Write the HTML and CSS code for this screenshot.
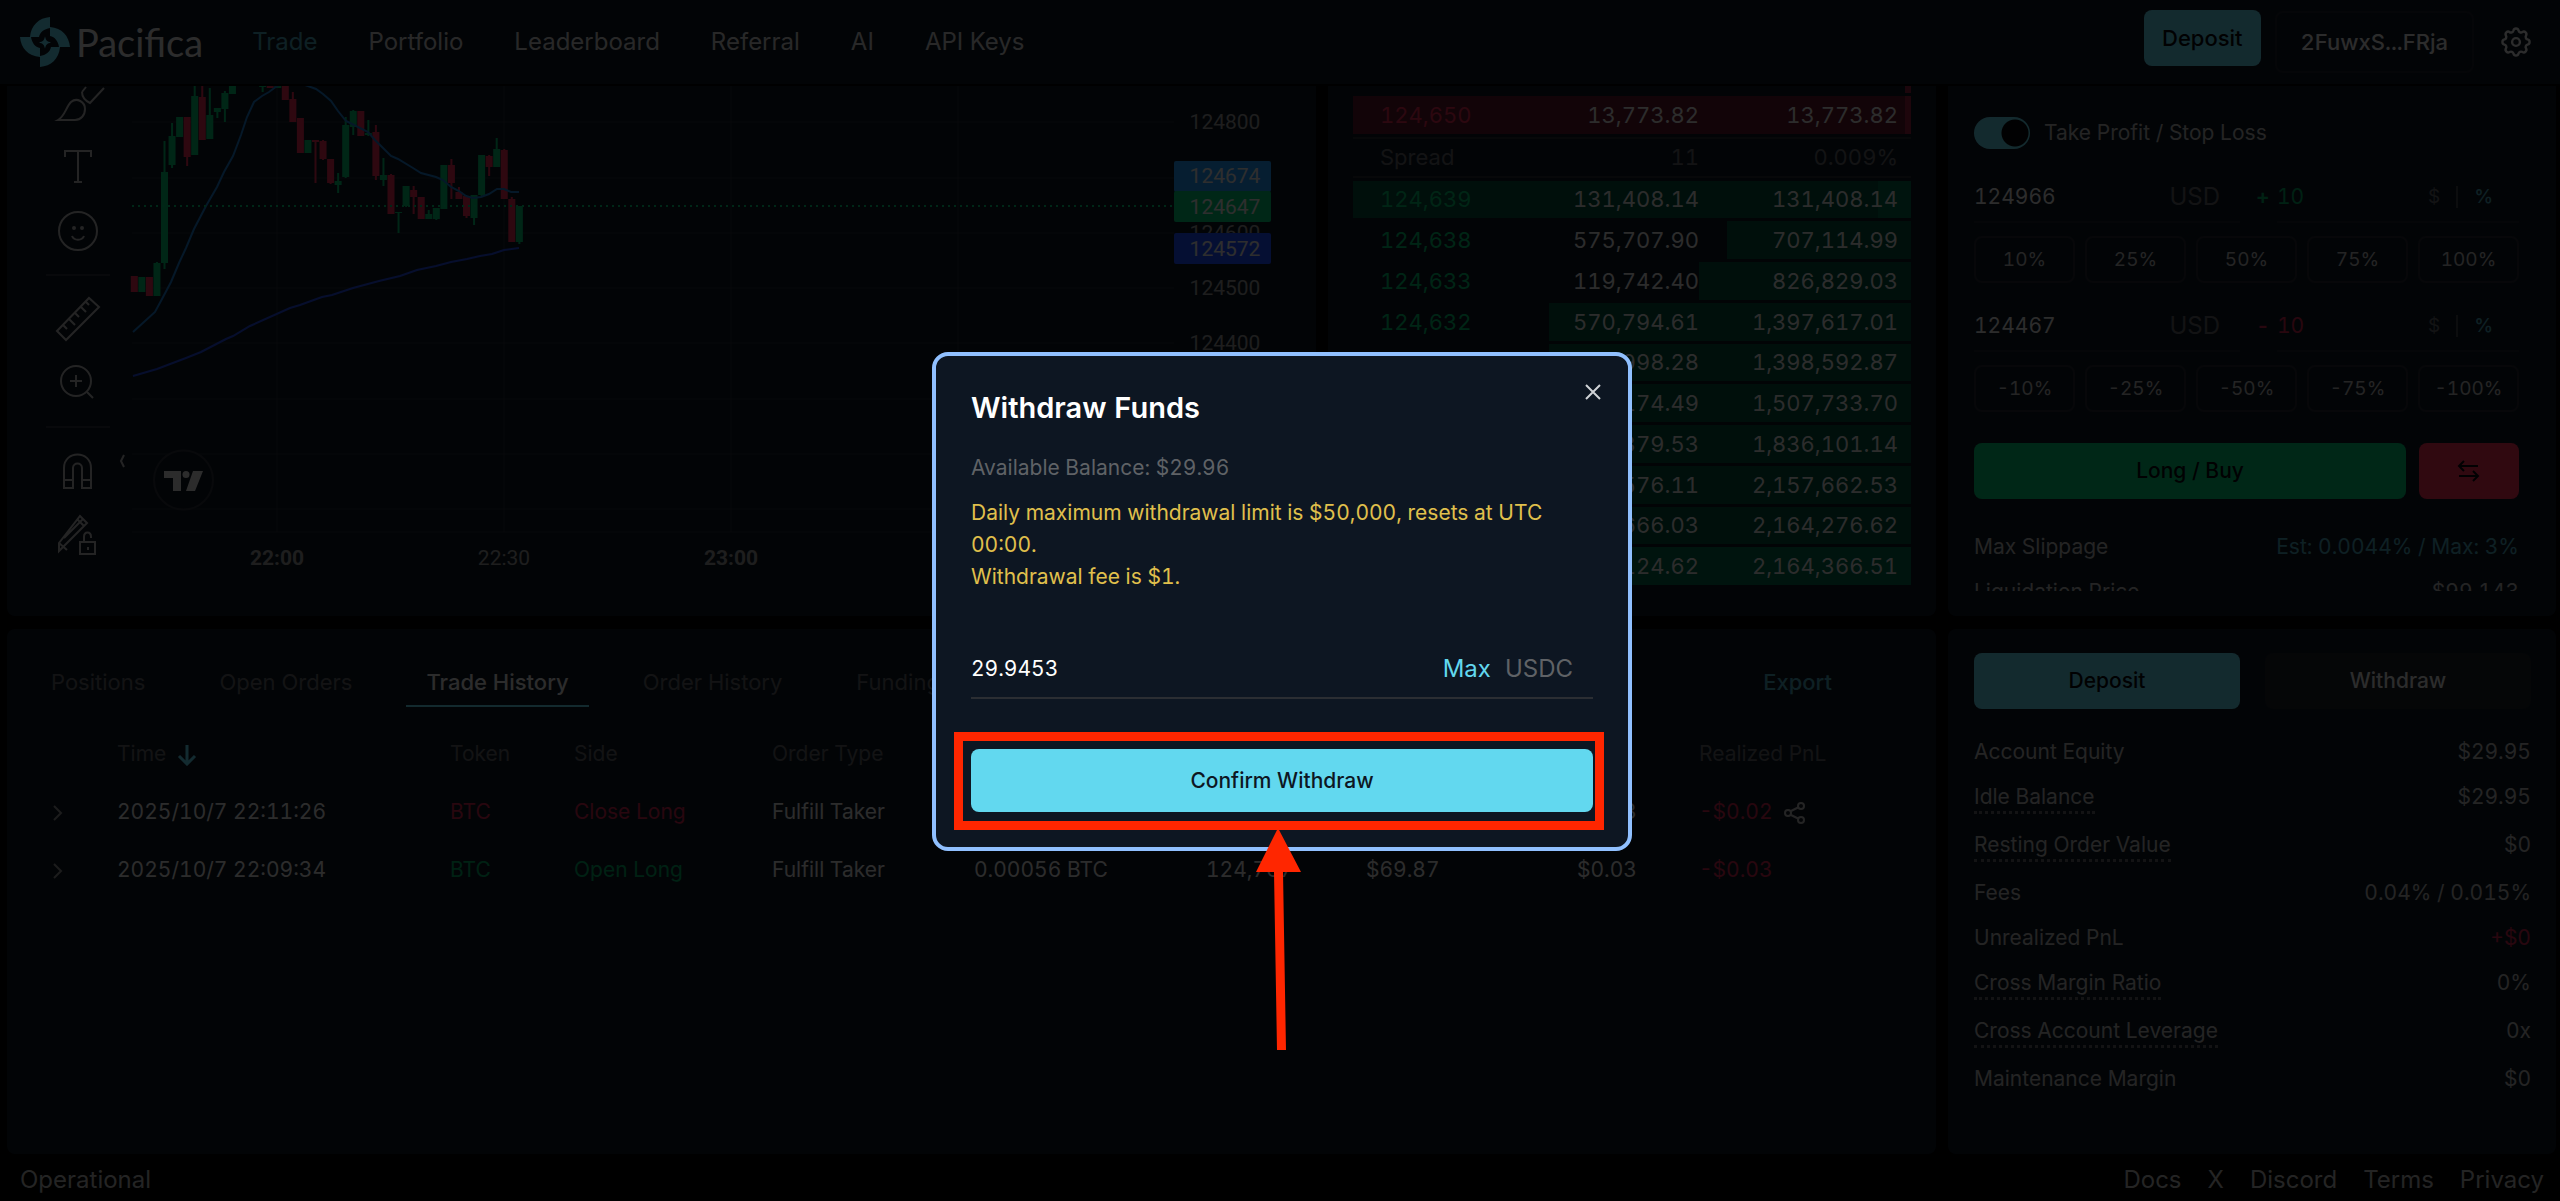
FILE: index.html
```html
<!DOCTYPE html>
<html lang="en">
    <head>
        <meta charset="utf-8">
        <meta name="viewport" content="width=device-width, initial-scale=1.0">
        <title>Pacifica</title>
        <link rel="stylesheet" href="styles.css">
    </head>
    <body>
        <header class="topbar">
            <a class="brand" href="#">
                <svg width="50" height="50" viewBox="0 0 50 50" fill="#62d8ef">
                    <path d="M30 0v11c-6 1-10 4-11 9H10C11 8 19 1 30 0z"/>
                    <path d="M50 30H39c-1-6-4-10-9-11V10C42 11 49 19 50 30z"/>
                    <path d="M20 50V39c6-1 10-4 11-9h9C39 42 31 49 20 50z"/>
                    <path d="M0 20h11c1 6 4 10 9 11v9C8 39 1 31 0 20z"/>
                    <path d="M25 19.500c1 4 2 5 6 6-4 1-5 2-6 6-1-4-2-5-6-6 4-1 5-2 6-6z"/>
                </svg>
                <span>Pacifica</span>
            </a>
            <nav class="nav">
                <a class="active" href="#">Trade</a>
                <a href="#">Portfolio</a>
                <a href="#">Leaderboard</a>
                <a href="#">Referral</a>
                <a href="#">AI</a>
                <a href="#">API Keys</a>
            </nav>
            <div class="account">
                <button class="btn btn-primary btn-top">Deposit</button>
                <button class="btn btn-wallet">2FuwxS...FRja</button>
                <button class="btn-icon" aria-label="Settings">
                    <svg width="36" height="36" viewBox="0 0 24 24" fill="none" stroke="#dcdcdc" stroke-width="1.600" stroke-linejoin="round">
                        <path d="M10.300 4.300c.4-1.800 3-1.800 3.400 0a1.700 1.700 0 0 0 2.600 1.100c1.500-1 3.300.8 2.400 2.400a1.700 1.700 0 0 0 1 2.500c1.800.4 1.800 3 0 3.400a1.700 1.700 0 0 0-1 2.600c.9 1.500-.9 3.300-2.400 2.400a1.700 1.700 0 0 0-2.600 1c-.4 1.800-3 1.800-3.400 0a1.700 1.700 0 0 0-2.600-1c-1.500.9-3.300-.9-2.400-2.400a1.700 1.700 0 0 0-1-2.600c-1.800-.4-1.800-3 0-3.400a1.700 1.700 0 0 0 1-2.500c-.9-1.600.9-3.400 2.400-2.400 1 .6 2.300.1 2.600-1.100z"/>
                        <circle cx="12" cy="12" r="2.600"/>
                    </svg>
                </button>
            </div>
        </header>

        <main class="workspace">
            <section class="panel chart">
                <div class="tools">
                    <button aria-label="Brush"><svg viewBox="0 0 56 56"><path d="M8 45c7-4 8-13 13-18 6-5 14 0 14 7 0 6-4 11-10 11zM32 17c0 5 4 9 8 11l14-15M32 17l4-5"/></svg></button>
                    <button aria-label="Text"><svg viewBox="0 0 56 56"><path d="M15 18v-6h26v6M28 12v31M24 43h8"/></svg></button>
                    <button aria-label="Emoji"><svg viewBox="0 0 56 56"><circle cx="28" cy="28" r="19"/><path d="M22 33c2 5 10 5 12 0"/><circle cx="24" cy="25" r="1"/><circle cx="32" cy="25" r="1"/></svg></button>
                    <hr>
                    <button aria-label="Measure"><svg viewBox="0 0 56 56"><path d="M7 40L39 7l10 9-33 33zM13 34l4 4M19 28l6 6M25 22l4 4M31 16l5 5M36 11l3 3"/></svg></button>
                    <button aria-label="Zoom in"><svg viewBox="0 0 56 56"><circle cx="26" cy="26" r="15"/><path d="M26 20v12M20 26h12M37 37l6 6"/></svg></button>
                    <hr>
                    <button aria-label="Magnet"><svg viewBox="0 0 56 56"><path d="M14 45V25c0-18 27-18 27 0v20h-9V25c0-6-9-6-9 0v20zM14 37h9M32 37h9"/></svg></button>
                    <button aria-label="Lock drawings"><svg viewBox="0 0 56 56"><path d="M9 36L30 9l7 7-20 20-8 8zM9 36l8 7M14 31L33 12M27 12l7 7M30 35h15v12H30zM34 35v-5c0-6 7-6 7 0v1M38 40v3"/></svg></button>
                </div>
                <svg class="plot" viewBox="110 86 1206 530" preserveAspectRatio="xMinYMin slice">
                    <path class="grid" d="M132 122H1174M132 178H1174M132 233H1174M132 288H1174M132 343H1174M132 399H1174M132 454H1174M132 509H1174M277 86V532M504 86V532M731 86V532M958 86V532M132 532H1174"/>
                    <path class="collapse" d="M124 455l-3 6 3 6"/>
                    <polyline class="ma-slow" points="133,376 157,369 186,358 201,352 226,339 233,336 250,326 290,308 300,305 322,297 332,295 353,288 379,281 400,276 417,270 436,266 451,262 467,259 480,256 492,254 504,250 519,248"/>
                    <g id="candles"></g>
                    <polyline class="ma-fast" points="133,332 155,312 162,299 171,282 179,263 186,248 194,229 206,206 217,187 224,172 233,156 241,135 247,117 254,102 262,96 269,92 277,86 290,80 308,86 316,89 323,94 331,101 338,111 346,121 368,132 375,140 391,156 398,159 413,168 421,173 436,177 443,180 451,187 459,191 466,196 473,198 481,197 489,194 497,189 504,189 511,192 519,192"/>
                    <path class="last" d="M132 206H1174"/>
                    <g class="axis">
                        <text x="1225" y="129">124800</text>
                        <text x="1225" y="240">124600</text>
                        <text x="1225" y="295">124500</text>
                        <text x="1225" y="350">124400</text>
                        <text class="major" x="277" y="565">22:00</text>
                        <text x="504" y="565">22:30</text>
                        <text class="major" x="731" y="565">23:00</text>
                    </g>
                    <g class="tags">
                        <rect x="1174" y="161" width="97" height="31" rx="2" fill="#2196f3"/>
                        <rect x="1174" y="191" width="97" height="31" rx="2" fill="#00c373"/>
                        <rect x="1174" y="233" width="97" height="31" rx="2" fill="#1c4cff"/>
                        <text x="1225" y="183">124674</text>
                        <text x="1225" y="214">124647</text>
                        <text x="1225" y="256">124572</text>
                    </g>
                    <circle cx="183.500" cy="480" r="29.500" fill="#0d1622" stroke="#2c3038" stroke-width="2"/>
                    <path d="M164 471h17v20h-8v-13h-9zM193 471h10l-8 20h-9z" fill="#dcdcdc"/>
                    <circle cx="186" cy="474.500" r="3.500" fill="#dcdcdc"/>
                </svg>
            </section>

            <section class="panel book">
                <table>
                    <tbody>
                        <tr class="ask"><td>124,651</td><td>1,000.00</td><td>14,773.82</td></tr>
                        <tr class="ask flash"><td>124,650</td><td>13,773.82</td><td>13,773.82</td></tr>
                        <tr class="spread"><td>Spread</td><td>11</td><td>0.009%</td></tr>
                        <tr class="bid flash" style="--depth: 6%"><td>124,639</td><td>131,408.14</td><td>131,408.14</td></tr>
                        <tr class="bid" style="--depth: 33%"><td>124,638</td><td>575,707.90</td><td>707,114.99</td></tr>
                        <tr class="bid" style="--depth: 38%"><td>124,633</td><td>119,742.40</td><td>826,829.03</td></tr>
                        <tr class="bid" style="--depth: 65%"><td>124,632</td><td>570,794.61</td><td>1,397,617.01</td></tr>
                        <tr class="bid" style="--depth: 65%"><td>124,631</td><td>998.28</td><td>1,398,592.87</td></tr>
                        <tr class="bid" style="--depth: 70%"><td>124,630</td><td>109,174.49</td><td>1,507,733.70</td></tr>
                        <tr class="bid" style="--depth: 85%"><td>124,629</td><td>328,379.53</td><td>1,836,101.14</td></tr>
                        <tr class="bid" style="--depth: 100%"><td>124,628</td><td>321,576.11</td><td>2,157,662.53</td></tr>
                        <tr class="bid" style="--depth: 100%"><td>124,627</td><td>6,666.03</td><td>2,164,276.62</td></tr>
                        <tr class="bid flash" style="--depth: 100%"><td>124,626</td><td>124.62</td><td>2,164,366.51</td></tr>
                    </tbody>
                </table>
            </section>

            <section class="panel order">
                <div class="order-scroll">
                    <label class="toggle"><input type="checkbox" checked>Take Profit / Stop Loss</label>

                    <div class="trigger">
                        <div class="field price"><input type="text" value="124966" aria-label="Take profit price"><span class="unit">USD</span></div>
                        <span class="sign up">+</span>
                        <div class="field gain up"><input type="text" value="10" aria-label="Take profit gain"><span class="modes"><span>$</span><i></i><b>%</b></span></div>
                    </div>
                    <div class="presets">
                        <button>10%</button><button>25%</button><button>50%</button><button>75%</button><button>100%</button>
                    </div>

                    <div class="trigger">
                        <div class="field price"><input type="text" value="124467" aria-label="Stop loss price"><span class="unit">USD</span></div>
                        <span class="sign down">-</span>
                        <div class="field gain down"><input type="text" value="10" aria-label="Stop loss amount"><span class="modes"><span>$</span><i></i><b>%</b></span></div>
                    </div>
                    <div class="presets">
                        <button>-10%</button><button>-25%</button><button>-50%</button><button>-75%</button><button>-100%</button>
                    </div>

                    <div class="submit">
                        <button class="btn btn-long">Long / Buy</button>
                        <button class="btn btn-swap" aria-label="Switch side">
                            <svg width="24" height="28" viewBox="0 0 24 28" fill="none" stroke="#05080c" stroke-width="2"><path d="M21 9H2M7 4L2 9l5 5M2 19h19M16 14l5 5-5 5"/></svg>
                        </button>
                    </div>

                    <div class="stat"><span>Max Slippage</span><span class="accent">Est: 0.0044% / Max: 3%</span></div>
                    <div class="stat"><span>Liquidation Price</span><span>$99,143</span></div>
                </div>
            </section>

            <section class="panel history">
                <div class="tabs">
                    <button>Positions</button>
                    <button>Open Orders</button>
                    <button class="selected">Trade History</button>
                    <button>Order History</button>
                    <button>Funding History</button>
                    <a class="export" href="#">Export</a>
                </div>
                <table>
                    <colgroup>
                        <col class="c-open"><col class="c-time"><col class="c-token"><col class="c-side"><col class="c-type"><col class="c-size"><col class="c-price"><col class="c-value"><col class="c-fee"><col>
                    </colgroup>
                    <thead>
                        <tr>
                            <th></th>
                            <th>Time <svg width="20" height="22" viewBox="0 0 20 22" fill="none" stroke="#62d8ef" stroke-width="3"><path d="M10 1v18M2 12l8 8 8-8"/></svg></th>
                            <th>Token</th><th>Side</th><th>Order Type</th><th>Size</th><th>Price</th><th>Trade Value</th><th>Fee</th><th>Realized PnL</th>
                        </tr>
                    </thead>
                    <tbody>
                        <tr>
                            <td><svg class="chev" width="12" height="16" viewBox="0 0 12 16"><path d="M2 1l7 7-7 7"/></svg></td>
                            <td>2025/10/7 22:11:26</td><td class="down">BTC</td><td class="down">Close Long</td><td>Fulfill Taker</td>
                            <td>0.00056 BTC</td><td>124,738</td><td>$69.85</td><td>$0.03</td>
                            <td class="down">-$0.02 <svg class="share" width="24" height="24" viewBox="0 0 24 24"><circle cx="5" cy="12" r="3"/><circle cx="18" cy="5" r="3"/><circle cx="18" cy="19" r="3"/><path d="M8 10l8-4M8 14l8 4"/></svg></td>
                        </tr>
                        <tr>
                            <td><svg class="chev" width="12" height="16" viewBox="0 0 12 16"><path d="M2 1l7 7-7 7"/></svg></td>
                            <td>2025/10/7 22:09:34</td><td class="up">BTC</td><td class="up">Open Long</td><td>Fulfill Taker</td>
                            <td>0.00056 BTC</td><td>124,767</td><td>$69.87</td><td>$0.03</td>
                            <td class="down">-$0.03</td>
                        </tr>
                    </tbody>
                </table>
            </section>

            <section class="panel summary">
                <div class="transfer">
                    <button class="btn btn-primary">Deposit</button>
                    <button class="btn btn-quiet">Withdraw</button>
                </div>
                <div class="stats">
                    <div class="stat"><span>Account Equity</span><span>$29.95</span></div>
                    <div class="stat"><span class="hint">Idle Balance</span><span>$29.95</span></div>
                    <div class="stat"><span class="hint">Resting Order Value</span><span>$0</span></div>
                    <div class="stat"><span>Fees</span><span>0.04% / 0.015%</span></div>
                    <div class="stat"><span>Unrealized PnL</span><span class="down">+$0</span></div>
                    <div class="stat"><span class="hint">Cross Margin Ratio</span><span>0%</span></div>
                    <div class="stat"><span class="hint">Cross Account Leverage</span><span>0x</span></div>
                    <div class="stat"><span>Maintenance Margin</span><span>$0</span></div>
                </div>
            </section>
        </main>

        <footer class="footer">
            <span>Operational</span>
            <div class="links">
                <a href="#">Docs</a>
                <a href="#">X</a>
                <a href="#">Discord</a>
                <a href="#">Terms</a>
                <a href="#">Privacy</a>
            </div>
        </footer>

        <div class="overlay">
            <div class="modal" role="dialog" aria-labelledby="modalTitle">
                <button class="close" aria-label="Close"><svg width="18" height="18" viewBox="0 0 18 18" fill="none" stroke="#cfd2d6" stroke-width="2"><path d="M2 2l14 14M16 2L2 16"/></svg></button>
                <h2 id="modalTitle">Withdraw Funds</h2>
                <p class="balance">Available Balance: $29.96</p>
                <p class="notice">Daily maximum withdrawal limit is $50,000, resets at UTC 00:00.<br>Withdrawal fee is $1.</p>
                <div class="amount">
                    <input type="text" value="29.9453" aria-label="Amount">
                    <button class="max">Max</button>
                    <span>USDC</span>
                </div>
                <div class="confirm">
                    <button class="btn">Confirm Withdraw</button>
                    <svg class="callout" width="650" height="318" viewBox="0 0 650 318">
                        <rect x="4.500" y="4.500" width="641" height="89" fill="none" stroke="#ff2600" stroke-width="9"/>
                        <path d="M324 96l23 44h-18l3 178h-9l-3-178h-18z" fill="#ff2600"/>
                    </svg>
                </div>
            </div>
        </div>
        <script src="chart.js"></script>
    </body>
</html>
```
FILE: styles.css
```css
* {box-sizing: border-box;}

body {
    display: flex;
    flex-direction: column;
    min-height: 100vh;
    margin: 0;
    background: #000;
    color: #dcdcdc;
    font-family: Inter, "Liberation Sans", sans-serif;
    font-size: 21px;
    line-height: 28px;
    font-variant-numeric: tabular-nums;
}

a {color: inherit; text-decoration: none;}
button, input {font: inherit; color: inherit; background: none; border: 0; padding: 0; margin: 0;}
table {border-collapse: collapse; width: 100%;}
th {font-weight: 400; text-align: left;}
td, th {padding: 0;}

.up {color: #00a562;}
.down {color: #c8234b;}
.accent {color: #48a0b2;}

/* top bar */
.topbar {
    display: flex;
    align-items: center;
    height: 84px;
    padding: 0 16px 0 20px;
    margin-bottom: 2px;
    background: #0d1622;
    font-size: 24px;
}
.brand {display: flex; align-items: center; gap: 6px; font-family: Lato, sans-serif; font-size: 38px; margin-right: 49px;}
.nav {display: flex; gap: 51px; color: #c8c8c8;}
.nav .active {color: #48a0b2;}
.account {display: flex; align-items: center; gap: 14px; margin-left: auto; font-size: 22px;}

.btn {height: 56px; border-radius: 8px; font-weight: 500;}
.btn-primary {background: #62d0e4; color: #05080c;}
.btn-top {padding: 0 18px; margin-bottom: 8px;}
.btn-wallet {height: 62px; padding: 0 24px; border: 2px solid #1b2029;}
.btn-icon {width: 56px; height: 56px; display: flex; align-items: center; justify-content: center;}

/* layout */
.workspace {
    display: grid;
    grid-template-columns: minmax(0, 1fr) 608px 608px;
    grid-template-rows: 530px 1fr;
    gap: 13px 12px;
    flex: 1;
    padding: 0 4px 0 7px;
}
.panel {background: #0d1622; border-radius: 8px; overflow: hidden;}
.chart, .book, .order {border-top-left-radius: 0; border-top-right-radius: 0;}
.history {grid-column: span 2;}

/* chart */
.chart {display: flex;}
.tools {width: 64px; margin: -15px 0 0 39px; flex: none;}
.tools button {display: block; width: 64px; height: 64px;}
.tools svg {display: block; width: 56px; height: 56px; margin: 0 auto; fill: none; stroke: #b4b4b4; stroke-width: 2;}
.tools hr {border: 0; height: 2px; margin: 11px 0; background: #2c3038;}
.plot {flex: 1; min-width: 0; height: 530px;}
.grid {stroke: #252b35; fill: none;}
.collapse {stroke: #b4b4b4; stroke-width: 2; fill: none;}
.ma-fast {stroke: #1a78c8; stroke-width: 2; fill: none;}
.ma-slow {stroke: #2048e0; stroke-width: 2; fill: none;}
.last {stroke: #00c373; stroke-width: 2; stroke-dasharray: 2 4;}
.axis text, .tags text {font-size: 21px; text-anchor: middle; fill: #969696; font-family: Roboto, sans-serif;}
.axis .major {font-weight: 700;}
.tags text {fill: #e6e6e6;}
.candle-up {fill: #00bd6e;}
.candle-down {fill: #e62850;}

/* order book */
.book {padding: 0 25px; font-size: 22px;}
.book table {height: 536px; margin-top: -34px; border-collapse: separate; border-spacing: 0 3px;}
.book td {text-align: right; width: 35%;}
.book td:first-child {text-align: left; padding-left: 27px; width: 27%;}
.book td:last-child {padding-right: 13px; width: 38%;}
.bid td:first-child {color: #00b86c;}
.ask td:first-child {color: #dc2850;}
.bid {background: linear-gradient(to left, #004b37 var(--depth), transparent var(--depth));}
.bid.flash {background: linear-gradient(to left, #006446 var(--depth), #004b37 var(--depth));}
.ask {background: linear-gradient(to left, #8c1e3c 1%, transparent 1%);}
.ask.flash {background: linear-gradient(to left, #961e3c 1%, #5a1428 1%);}
.spread {height: 41px; color: #5f6266;}
.spread td, .spread td:first-child {border-top: 2px solid #262a30; border-bottom: 2px solid #262a30; color: #5f6266;}

/* order form */
.order {padding: 0 37px 0 26px;}
.order-scroll {height: 505px; padding-top: 31px; overflow: hidden;}
.toggle {display: flex; align-items: center; gap: 14px; height: 32px; margin-bottom: 27px; color: #b4b4b4;}
.toggle input {
    appearance: none;
    width: 56px;
    height: 32px;
    border-radius: 16px;
    background: radial-gradient(circle at 41px 16px, #05080c 13px, transparent 14px) #62d0e4;
}
.trigger {display: flex; margin-bottom: 13px;}
.field {display: flex; align-items: center; height: 47px; padding-bottom: 4px; border-bottom: 2px solid #1c2129;}
.field input {min-width: 0; flex: 1; width: 0; color: inherit;}
.price {flex: 266;}
.gain {flex: 242;}
.unit {color: #5f6266; font-size: 24px; padding-right: 20px;}
.sign {width: 37px; line-height: 41px; padding-left: 16px; font-weight: 600;}
.modes {display: flex; align-items: center; gap: 16px; padding-right: 26px; font-size: 19px; color: #5f6266;}
.modes i {width: 2px; height: 22px; background: #3c4046;}
.modes b {color: #48a0b2; font-weight: 500;}
.presets {display: grid; grid-template-columns: repeat(5, 1fr); gap: 10px; margin-bottom: 22px;}
.presets button {height: 47px; border: 2px solid #23272f; border-radius: 8px; font-size: 19px; color: #b4b4b4;}
.submit {display: flex; gap: 13px; margin: 31px 0 33px;}
.btn-long {flex: 1; background: #00c373; color: #05080c;}
.btn-swap {width: 100px; background: #f02d50; line-height: 0;}

.stat {display: flex; justify-content: space-between; align-items: flex-start; line-height: 29px; margin-bottom: 16px; color: #b4b4b4;}
.hint {border-bottom: 3px dotted #5f6266;}

/* history */
.tabs {display: flex; padding: 30px 104px 0 24px; gap: 34px; font-size: 22px;}
.tabs button {height: 48px; padding: 0 20px; border-bottom: 2px solid transparent; color: #5f6266;}
.tabs .selected {color: #dcdcdc; border-color: #62d0e4; font-weight: 500;}
.export {margin-left: auto; line-height: 46px; color: #48a0b2; font-weight: 500;}
.history table {table-layout: fixed; margin: 18px 0 0 45px; width: calc(100% - 45px);}
.history th, .history td {height: 58px; white-space: nowrap;}
.history th {color: #5f6266;}
.history svg {vertical-align: middle; margin-left: 5px;}
.history .chev {fill: none; stroke: #8c8c8c; stroke-width: 2; margin-left: 0;}
.history .share {fill: none; stroke: #b4b4b4; stroke-width: 2;}
.c-open {width: 65px;}
.c-time {width: 333px;}
.c-token {width: 124px;}
.c-side {width: 198px;}
.c-type {width: 202px;}
.c-size {width: 232px;}
.c-price {width: 160px;}
.c-value {width: 211px;}
.c-fee {width: 122px;}

/* account summary */
.summary {padding: 24px 25px 0 26px;}
.transfer {display: grid; grid-template-columns: 1fr 1fr; gap: 25px; margin-bottom: 28px;}
.btn-quiet {background: #191e26;}

.footer {display: flex; justify-content: space-between; align-items: center; height: 47px; padding: 4px 16px 0 20px; font-size: 24px; color: #b4b4b4;}
.links {display: flex; gap: 26px;}

/* withdraw dialog */
.overlay {
    position: fixed;
    inset: 0;
    display: flex;
    align-items: center;
    justify-content: center;
    padding: 2px 0 0 4px;
    background: rgba(0, 0, 0, 0.8);
}
.modal {
    position: relative;
    width: 700px;
    padding: 32px 35px 35px;
    background: #0d1622;
    border: 4px solid #90c0ff;
    border-radius: 16px;
}
.modal h2 {margin: 0; font-size: 29px; line-height: 40px; font-weight: 600; color: #fff;}
.modal p {margin: 0;}
.modal .balance {margin: 24px 0 13px; line-height: 32px; color: #5f6266;}
.modal .notice {line-height: 32px; color: #e0c04c;}
.close {position: absolute; top: 27px; right: 26px; line-height: 0;}
.amount {display: flex; align-items: center; gap: 14px; height: 58px; margin: 48px 0 50px; padding-right: 20px; border-bottom: 2px solid #2b2e33; color: #fff;}
.amount input {flex: 1; min-width: 0;}
.amount .max {color: #62d8ef; font-size: 24px;}
.amount span {color: #5f6266; font-size: 24px;}
.confirm {position: relative;}
.confirm .btn {width: 100%; height: 63px; background: #62d8ef; color: #0d1622;}
.callout {position: absolute; left: -17px; top: -17px; pointer-events: none;}
```
FILE: chart.js
```js
// slot, direction, high, body top, body bottom, low
var candles = [
    [0, 'd', 276, 276, 292, 292], [1, 'u', 277, 277, 292, 292], [2, 'd', 277, 277, 296, 296], [3, 'u', 262, 263, 296, 296],
    [4, 'u', 141, 172, 263, 269], [5, 'u', 123, 136, 165, 168], [6, 'u', 117, 117, 137, 137], [7, 'd', 117, 117, 157, 166],
    [8, 'u', 86, 96, 155, 155], [9, 'd', 86, 97, 140, 140], [10, 'u', 88, 115, 139, 139], [11, 'u', 108, 108, 112, 118],
    [12, 'u', 91, 93, 109, 122], [13, 'u', 86, 86, 94, 94], [17, 'u', 86, 86, 87, 92], [18, 'd', 86, 86, 88, 88],
    [19, 'u', 86, 86, 88, 88], [20, 'd', 86, 86, 100, 100], [21, 'd', 92, 99, 122, 122], [22, 'd', 118, 118, 153, 153],
    [23, 'u', 140, 140, 153, 153], [24, 'd', 140, 140, 142, 183], [25, 'd', 140, 141, 159, 160], [26, 'd', 159, 159, 183, 184],
    [27, 'u', 173, 181, 185, 193], [28, 'u', 117, 125, 177, 178], [29, 'u', 110, 111, 127, 135], [30, 'd', 111, 111, 136, 136],
    [31, 'u', 120, 133, 135, 136], [32, 'd', 125, 132, 176, 180], [33, 'u', 158, 175, 180, 186], [34, 'd', 174, 175, 214, 214],
    [35, 'u', 212, 212, 213, 233], [36, 'u', 186, 186, 206, 207], [37, 'd', 186, 190, 197, 214], [38, 'd', 197, 197, 219, 219],
    [39, 'u', 210, 214, 219, 219], [40, 'u', 208, 208, 219, 220], [41, 'u', 165, 165, 209, 209], [42, 'd', 159, 165, 183, 199],
    [43, 'd', 187, 192, 199, 199], [44, 'd', 196, 196, 216, 218], [45, 'u', 195, 195, 218, 225], [46, 'u', 155, 155, 195, 196],
    [47, 'd', 155, 156, 167, 176], [48, 'u', 138, 149, 167, 167], [49, 'd', 149, 150, 199, 199], [50, 'd', 197, 199, 242, 242],
    [51, 'u', 206, 206, 242, 244]
];

function bar(x, y, width, height, dir) {
    var rect = document.createElementNS('http://www.w3.org/2000/svg', 'rect');
    rect.setAttribute('x', x);
    rect.setAttribute('y', y);
    rect.setAttribute('width', width);
    rect.setAttribute('height', Math.max(height, 1));
    rect.setAttribute('class', dir == 'u' ? 'candle-up' : 'candle-down');
    return rect;
}

var layer = document.getElementById('candles');
candles.forEach(function (c) {
    var x = 134.3 + c[0] * 7.55;
    layer.appendChild(bar(x - 1, c[2], 2, c[5] - c[2], c[1]));
    layer.appendChild(bar(x - 3.5, c[3], 7, c[4] - c[3], c[1]));
});
```
